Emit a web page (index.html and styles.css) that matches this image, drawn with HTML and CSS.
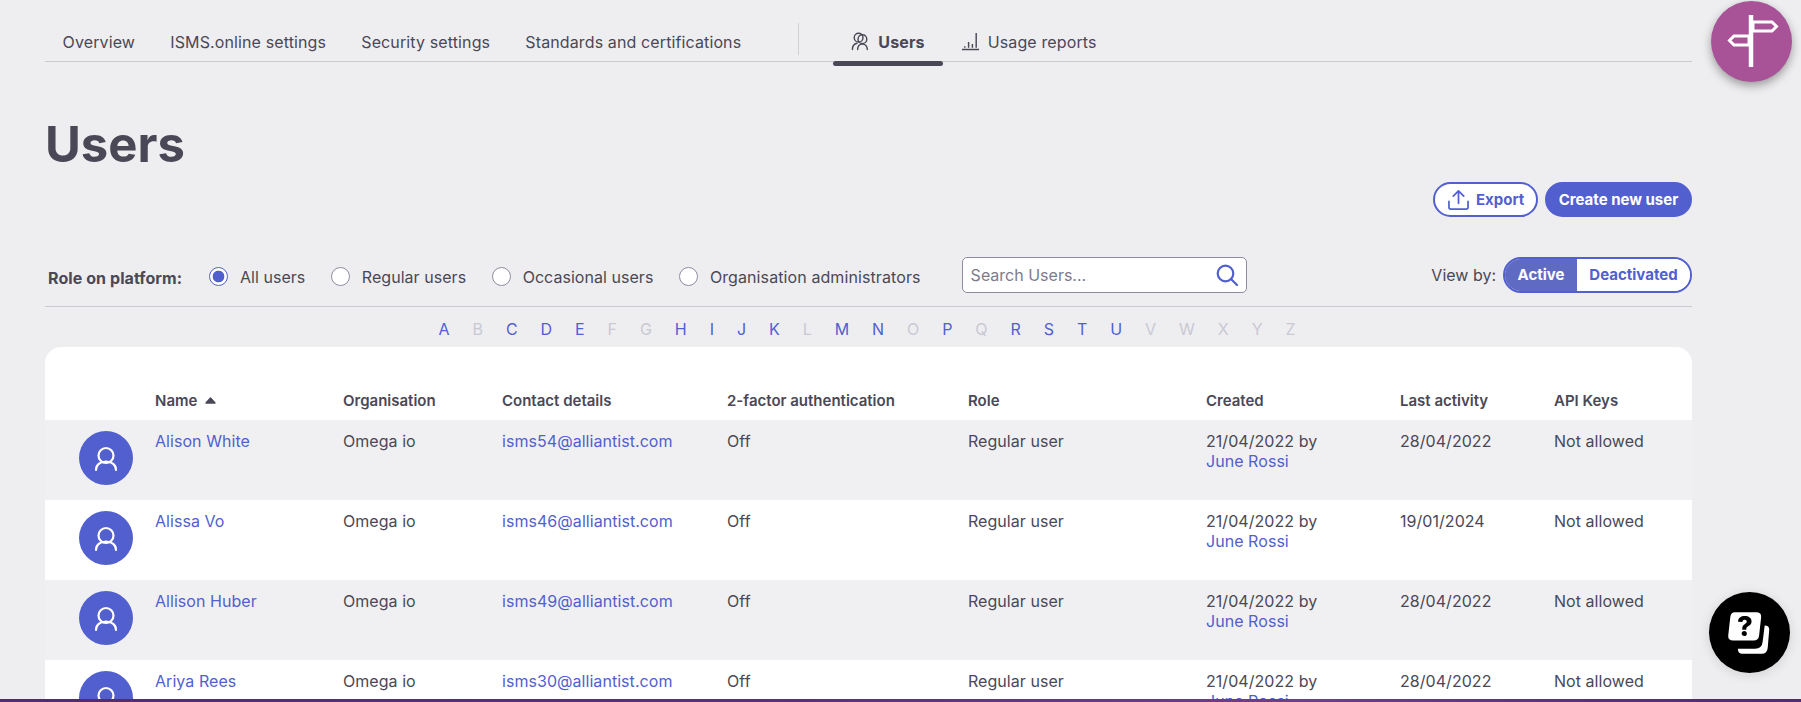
FILE: index.html
```html
<!DOCTYPE html>
<html lang="en">
<head>
<meta charset="utf-8">
<title>Users</title>
<link rel="stylesheet" href="styles.css">
</head>
<body>
<div class="page">
  <nav class="tabs">
    <a class="tab">Overview</a>
    <a class="tab">ISMS.online settings</a>
    <a class="tab">Security settings</a>
    <a class="tab">Standards and certifications</a>
    <span class="tab-divider"></span>
    <a class="tab tab-active">
      <svg class="tab-icon" viewBox="0 0 20 20" fill="none" stroke="currentColor" stroke-width="1.5" stroke-linecap="round"><circle cx="8" cy="6" r="4.6"/><circle cx="12" cy="7.500" r="4.6"/><path d="M1.500 18.500c0-3.600 1.800-6 4.800-6.600M7 18.500c0-3.400 2-5.700 5-5.700s5 2.300 5.200 5.700"/></svg>
      Users
    </a>
    <a class="tab">
      <svg class="tab-icon" viewBox="0 0 20 20" fill="none" stroke="currentColor" stroke-width="1.500"><path d="M1 18.500h18M4 15v1.500M8 10.500v6M12 12.500v4M16 1v15.500"/></svg>
      Usage reports
    </a>
  </nav>

  <h1 class="title">Users</h1>

  <div class="actions">
    <button class="btn btn-outline">
      <svg class="btn-icon" viewBox="0 0 22 22" fill="none" stroke="currentColor" stroke-width="1.8" stroke-linecap="round" stroke-linejoin="round"><path d="M11 15V2M5.500 7.500 11 2l5.500 5.500M1 13v6a2 2 0 0 0 2 2h16a2 2 0 0 0 2-2v-6"/></svg>
      Export
    </button>
    <button class="btn btn-solid">Create new user</button>
  </div>

  <div class="filters">
    <span class="filter-label">Role on platform:</span>
    <label class="radio radio-checked"><span class="radio-dot"></span>All users</label>
    <label class="radio"><span class="radio-dot"></span>Regular users</label>
    <label class="radio"><span class="radio-dot"></span>Occasional users</label>
    <label class="radio radio-wide"><span class="radio-dot"></span>Organisation administrators</label>
    <div class="search">
      <span class="search-text">Search Users...</span>
      <svg class="search-icon" viewBox="0 0 22 22" fill="none" stroke="currentColor" stroke-width="2.200" stroke-linecap="round"><circle cx="9.500" cy="9.500" r="7.800"/><path d="m15 15 6 6"/></svg>
    </div>
    <div class="view-by">
      <span>View by:</span>
      <div class="toggle">
        <span class="toggle-on">Active</span>
        <span class="toggle-off">Deactivated</span>
      </div>
    </div>
  </div>

  <div class="alphabet">
    <a class="on">A</a><a>B</a><a class="on">C</a><a class="on">D</a><a class="on">E</a><a>F</a><a>G</a><a class="on">H</a><a class="on">I</a><a class="on">J</a><a class="on">K</a><a>L</a><a class="on">M</a><a class="on">N</a><a>O</a><a class="on">P</a><a>Q</a><a class="on">R</a><a class="on">S</a><a class="on">T</a><a class="on">U</a><a>V</a><a>W</a><a>X</a><a>Y</a><a>Z</a>
  </div>

  <section class="card">
    <div class="row head">
      <span></span>
      <span class="name-head">Name <svg class="sort-arrow" viewBox="0 0 11 7"><path d="M5.500 1 10 6H1z" fill="currentColor" stroke="currentColor" stroke-width="1.400" stroke-linejoin="round"/></svg></span>
      <span>Organisation</span>
      <span>Contact details</span>
      <span>2-factor authentication</span>
      <span>Role</span>
      <span>Created</span>
      <span>Last activity</span>
      <span>API Keys</span>
    </div>

    <div class="row body-row">
      <span class="avatar"><svg viewBox="0 0 54 54" fill="none" stroke="#fff" stroke-width="2.200" stroke-linecap="round"><circle cx="27" cy="24.500" r="7.500"/><path d="M17 39c0-5 4-8.500 10-8.500s10 3.500 10 8.500"/></svg></span>
      <a class="link">Alison White</a><span>Omega io</span><a class="link">isms54@alliantist.com</a><span>Off</span><span>Regular user</span>
      <span>21/04/2022 by<br><a class="link">June Rossi</a></span><span>28/04/2022</span><span>Not allowed</span>
    </div>
    <div class="row body-row">
      <span class="avatar"><svg viewBox="0 0 54 54" fill="none" stroke="#fff" stroke-width="2.200" stroke-linecap="round"><circle cx="27" cy="24.500" r="7.500"/><path d="M17 39c0-5 4-8.500 10-8.500s10 3.500 10 8.500"/></svg></span>
      <a class="link">Alissa Vo</a><span>Omega io</span><a class="link">isms46@alliantist.com</a><span>Off</span><span>Regular user</span>
      <span>21/04/2022 by<br><a class="link">June Rossi</a></span><span>19/01/2024</span><span>Not allowed</span>
    </div>
    <div class="row body-row">
      <span class="avatar"><svg viewBox="0 0 54 54" fill="none" stroke="#fff" stroke-width="2.200" stroke-linecap="round"><circle cx="27" cy="24.500" r="7.500"/><path d="M17 39c0-5 4-8.500 10-8.500s10 3.500 10 8.500"/></svg></span>
      <a class="link">Allison Huber</a><span>Omega io</span><a class="link">isms49@alliantist.com</a><span>Off</span><span>Regular user</span>
      <span>21/04/2022 by<br><a class="link">June Rossi</a></span><span>28/04/2022</span><span>Not allowed</span>
    </div>
    <div class="row body-row">
      <span class="avatar"><svg viewBox="0 0 54 54" fill="none" stroke="#fff" stroke-width="2.200" stroke-linecap="round"><circle cx="27" cy="24.500" r="7.500"/><path d="M17 39c0-5 4-8.500 10-8.500s10 3.500 10 8.500"/></svg></span>
      <a class="link">Ariya Rees</a><span>Omega io</span><a class="link">isms30@alliantist.com</a><span>Off</span><span>Regular user</span>
      <span>21/04/2022 by<br><a class="link">June Rossi</a></span><span>28/04/2022</span><span>Not allowed</span>
    </div>
  </section>
</div>

<div class="fab-guide">
  <svg viewBox="0 0 81 81" fill="none" stroke="#fff" stroke-width="3"><path d="M40 14v52" stroke-width="4.500"/><path d="M42 21h19l4.500 4.500-4.500 4.500H42zM38 35H23l-4.500 4.500 4.500 4.500h15z"/></svg>
</div>
<div class="fab-help">
  <svg viewBox="0 0 80 80"><path d="M25.500 20h21q5.500 0 5 5l-2 18q-.5 5-5.500 5H24q-5.500 0-5-5l2-18q.5-5 4.500-5z" fill="#fff"/><path d="M55 33q4.500 0 4.500 4l-1.500 18q-.5 6-6 6H33q-4.500 0-4.500-5h17q7 0 7.500-7z" fill="#fff"/><text x="35.500" y="43" class="help-mark">?</text></svg>
</div>
<div class="bottom-bar"></div>
</body>
</html>
```

FILE: styles.css
```css
* { box-sizing: border-box; }
html, body { margin: 0; height: 100%; overflow: hidden; }
body {
  background: #eeeef0;
  color: #4a4856;
  font-family: Inter, "Liberation Sans", sans-serif;
  font-size: 16px;
  line-height: 20px;
}
.page { width: 1801px; padding: 0 109px 0 45px; }

.tabs {
  display: flex;
  align-items: center;
  height: 62px;
  padding: 22px 0 0;
  border-bottom: 1px solid #c9c9ce;
  letter-spacing: .12px;
}
.tab {
  display: flex;
  align-items: center;
  gap: 8px;
  height: 40px;
  padding: 0 17.600px;
  white-space: nowrap;
}
.tab-divider { width: 1px; height: 32px; margin: -6px 34px 0 39px; background: #d0d0d6; }
.tab-active { position: relative; padding: 0 18.500px; font-weight: 700; }
.tab-active::after {
  content: "";
  position: absolute;
  left: 0; right: 0; bottom: -4px;
  height: 5px;
  border-radius: 3px;
  background: #4a4856;
}
.tab-icon { width: 19px; height: 19px; flex: none; }

.title {
  margin: 54px 0 0;
  font-size: 49px;
  line-height: 58px;
  font-weight: 700;
}

.actions { display: flex; justify-content: flex-end; gap: 7px; margin-top: 8px; }
.btn {
  display: flex;
  align-items: center;
  height: 35px;
  border-radius: 18px;
  border: 2px solid #515fcf;
  font: 700 15px/20px Inter, "Liberation Sans", sans-serif;
  padding: 0;
  white-space: nowrap;
}
.btn-outline { width: 105px; gap: 7px; padding-left: 13px; background: #fff; color: #515fcf; }
.btn-solid { width: 147px; justify-content: center; background: #515fcf; color: #fff; }
.btn-icon { width: 21px; height: 21px; flex: none; }

.filters {
  display: flex;
  align-items: center;
  height: 50px;
  margin-top: 40px;
  padding: 0 0 14px 3px;
  border-bottom: 1px solid #c9c9d2;
}
.filter-label { width: 161px; font-weight: 700; letter-spacing: .08px; padding-top: 7px; white-space: nowrap; }
.radio {
  display: flex;
  align-items: center;
  gap: 12px;
  margin: 4px 25.500px 0 0;
  letter-spacing: .04px;
  white-space: nowrap;
}
.radio-wide { letter-spacing: .1px; }
.radio-dot {
  width: 19px; height: 19px;
  border-radius: 50%;
  border: 1px solid #8e8ca0;
  background: #fff;
  flex: none;
}
.radio-checked .radio-dot {
  border-color: #515fcf;
  background: radial-gradient(circle, #515fcf 0 5.500px, #fff 6.200px);
}
.search {
  display: flex;
  align-items: center;
  justify-content: space-between;
  width: 285px;
  height: 36px;
  margin-left: 15.500px;
  padding: 0 8px;
  background: #fff;
  border: 1px solid #8e8ca0;
  border-radius: 5px;
}
.search-text { color: #7d7b8b; }
.search-icon { width: 22px; height: 22px; color: #515fcf; }
.view-by { display: flex; align-items: center; gap: 7px; margin-left: auto; }
.toggle {
  display: flex;
  height: 36px;
  width: 189px;
  border: 2px solid #515fcf;
  border-radius: 18px;
  overflow: hidden;
  font-size: 15px;
  font-weight: 700;
}
.toggle-on {
  display: flex; align-items: center; justify-content: center;
  width: 72px;
  background: #5f6bc2;
  color: #fff;
}
.toggle-off {
  display: flex; align-items: center; justify-content: center;
  flex: 1;
  background: #fff;
  color: #515fcf;
}

.alphabet {
  display: flex;
  justify-content: center;
  align-items: center;
  gap: 22.950px;
  height: 40px;
  padding: 4px 3px 0 0;
  color: #c9c9d4;
}
.alphabet .on { color: #515fcf; }

.card {
  background: #fff;
  border-radius: 16px 16px 0 0;
}
.row {
  display: grid;
  grid-template-columns: 110px 188px 159px 225px 241px 238px 194px 154px 138px;
}
.head {
  height: 73px;
  padding-top: 44px;
  font-size: 15px;
  font-weight: 600;
}
.name-head { display: flex; align-items: center; gap: 8px; height: 20px; }
.sort-arrow { width: 11px; height: 7px; margin-top: -2px; }
.body-row { height: 80px; padding-top: 11px; letter-spacing: .05px; }
.body-row:nth-child(even) { background: #f0f0f2; }
.avatar {
  display: block;
  width: 54px; height: 54px;
  margin: 0 0 0 34px;
  border-radius: 50%;
  background: #515fcf;
}
.avatar svg { display: block; width: 54px; height: 54px; }
.link { color: #515fcf; }

.fab-guide, .fab-help {
  position: fixed;
  width: 81px; height: 81px;
  border-radius: 50%;
}
.fab-guide {
  left: 1711px; top: 1px;
  background: #a85398;
  box-shadow: 0 4px 10px rgba(0,0,0,.35);
}
.fab-help {
  left: 1709px; top: 592px;
  background: #000;
  box-shadow: 0 2px 12px rgba(0,0,0,.12);
}
.fab-guide svg, .fab-help svg { display: block; width: 81px; height: 81px; }
.help-mark { font: 800 27px Inter, "Liberation Sans", sans-serif; fill: #000; text-anchor: middle; }
.bottom-bar {
  position: fixed;
  left: 0; right: 0; bottom: 0;
  height: 3px;
  background: linear-gradient(90deg, #4f2d6b 0%, #5a3272 45%, #6f3f82 72%, #5a3272 88%, #4f2d6b 100%);
}
```
